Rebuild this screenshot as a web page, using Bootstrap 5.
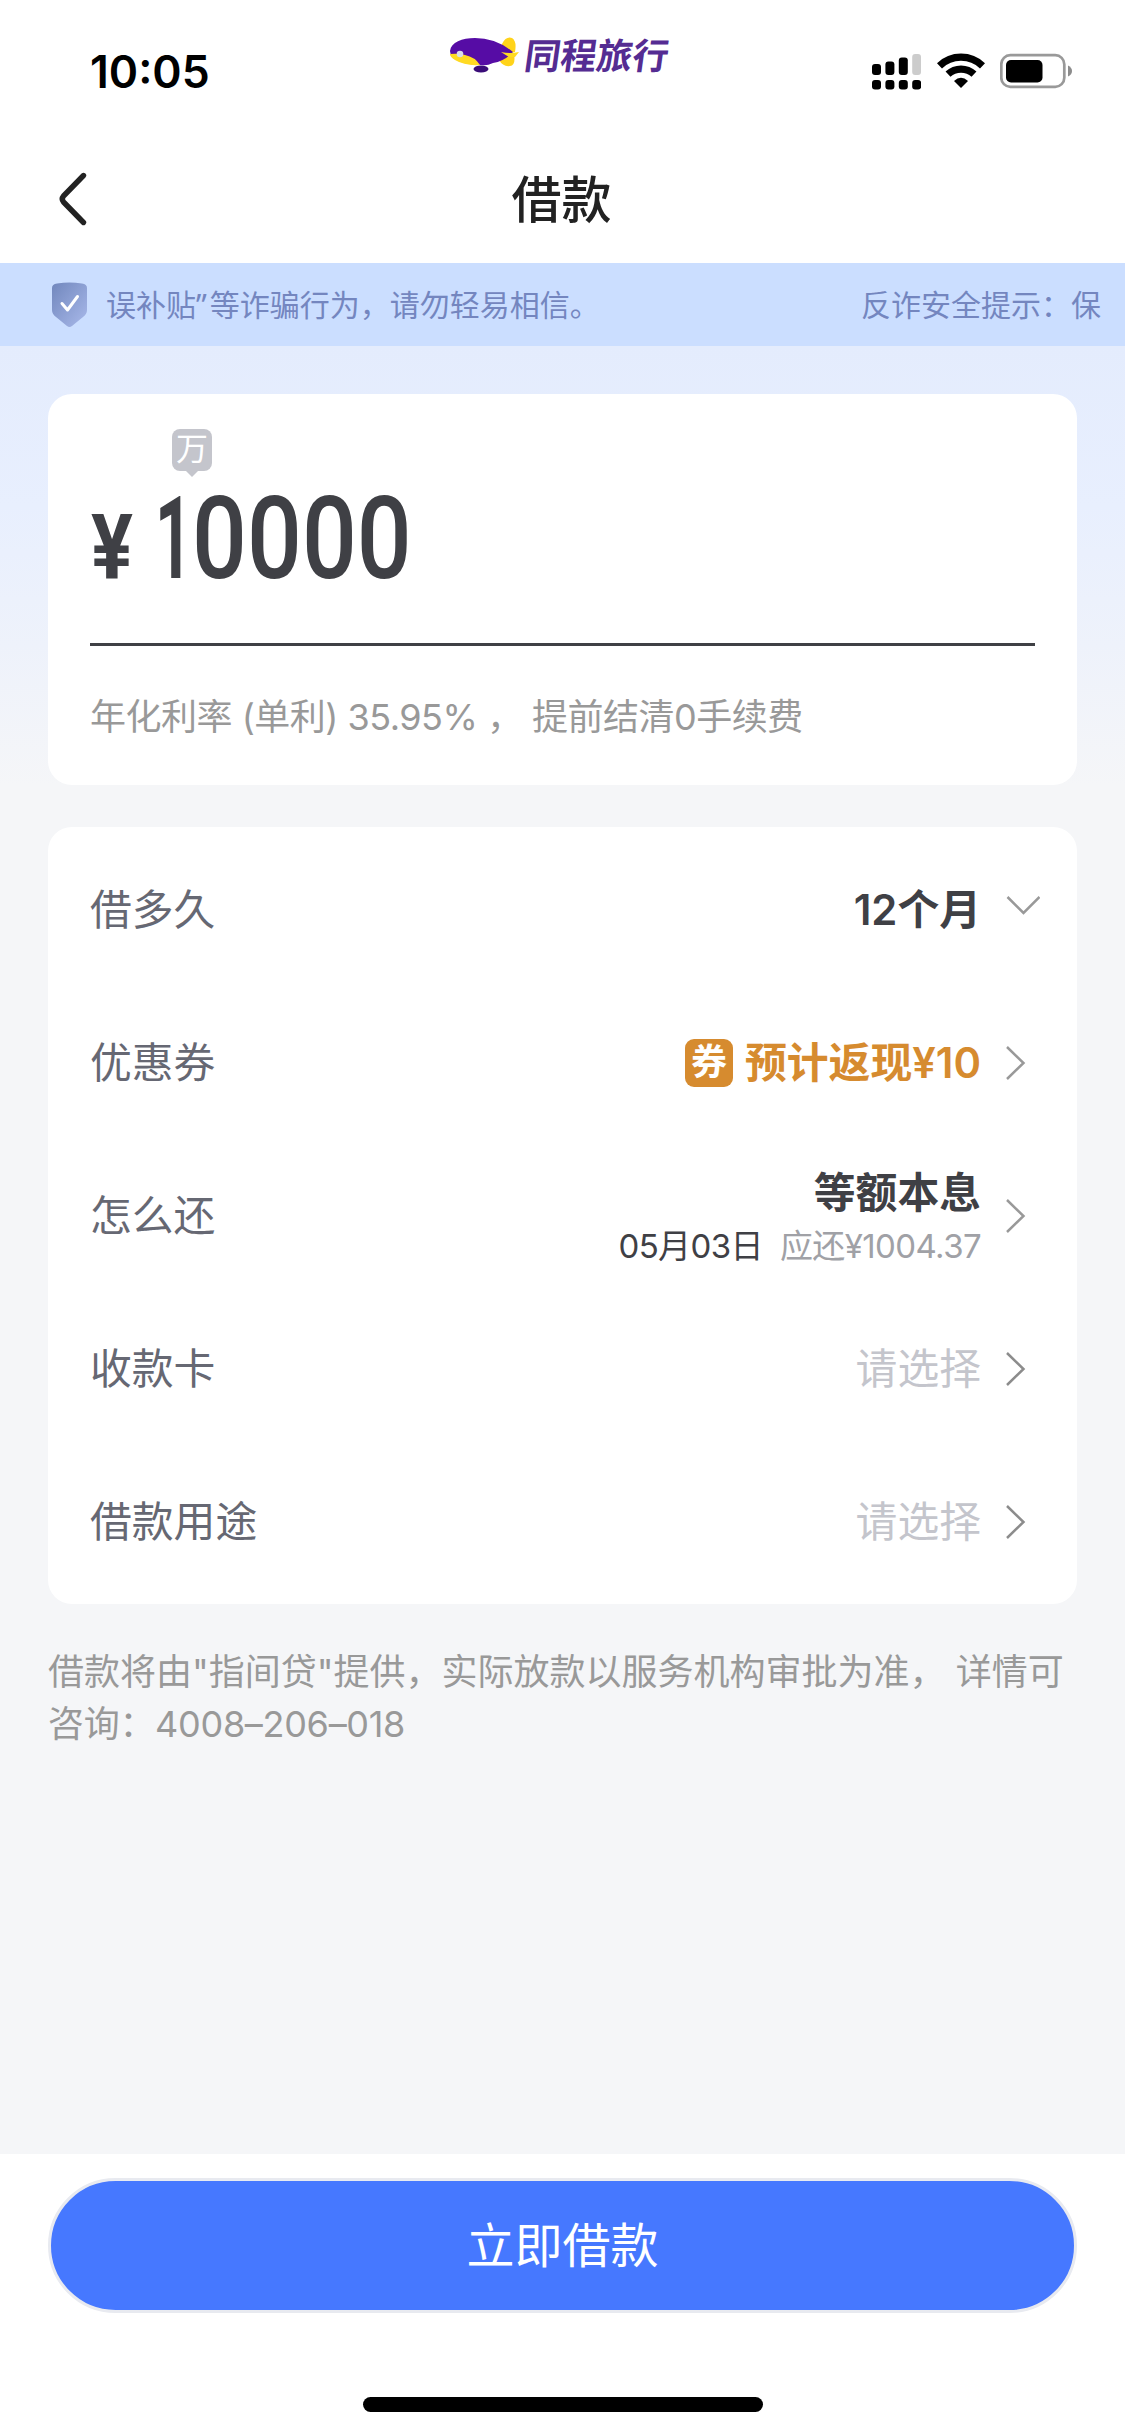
<!DOCTYPE html>
<html lang="zh-CN">
<head>
<meta charset="utf-8">
<meta name="viewport" content="width=device-width, initial-scale=1">
<title>借款</title>
<link href="https://cdn.jsdelivr.net/npm/bootstrap@5.3.0/dist/css/bootstrap.min.css" rel="stylesheet">
<style>
body{font-family:Inter,"Noto Sans CJK SC",sans-serif;background:#f5f6f8;color:#3f4045;line-height:1}
svg{display:block;flex:none}
.screen{width:1125px;height:2435px;overflow:hidden}
.status{height:143px;padding:0 52px 0 90px}
.clock{font-size:44.5px;font-weight:600;color:#000;width:362px;height:143px;line-height:144px}
.brand{padding-top:32px;width:431px}
.airship{margin:0 -4px 0 -2px;transform:translateX(2px)}
.brand-name{font-family:"Noto Sans CJK SC",sans-serif;font-weight:700;font-size:36px;line-height:43px;color:#552c92;transform:skewX(-8deg);margin-left:8px}
.gauges{padding-top:53px;gap:15.5px}
.titlebar{height:120px;padding:0 59px 0 57px}
.titlebar h1{font-size:50px;font-weight:500;color:#222;line-height:114px}
.side{width:60px;padding-top:28px}
.notice{height:83px;background:#cbdeff;color:#7486bf;font-size:30px;line-height:83px;padding:1px 24px 0 52px}
.notice-msg{margin-left:19px}
.quote{font-family:"Noto Sans",sans-serif;margin-right:3px}
.main{height:1808px;padding:48px 48px 0;background:linear-gradient(#e4ecfd 0,#e8effe 160px,#eef2fb 300px,#f5f6f8 440px)}
.panel{border:0;border-radius:24px;background:#fff}
.amount-panel{height:390.5px;padding:35px 42px 0}
.unit{width:40px;height:42px;border-radius:8px;background:#c4c5cc;color:#fff;font-size:32px;line-height:39px;margin-left:82px;position:relative}
.unit::after{content:"";position:absolute;left:14px;top:42px;border:6px solid transparent;border-top-color:#c4c5cc;border-bottom:0}
.amount{font-family:Roboto,sans-serif;height:174.500px;border-bottom:3px solid #3f4045}
.amount-in{height:82px;margin-top:25px;padding-top:2px}
.yen{font-size:91px;line-height:82px;font-weight:700;width:65px;padding-top:9px}
.yen-sign{display:inline-block;transform:scaleX(.86);transform-origin:0 0;margin-left:1px}
.digits{font-size:115px;line-height:82px;font-weight:500;transform:scaleX(.84);transform-origin:0 0}
.one{display:inline-block;transform:scaleX(.67);font-weight:700;transform-origin:0 0;margin-right:-21.800px}
.rate{font-size:36px;line-height:50px;color:#999;margin-top:46px;white-space:pre;letter-spacing:-.5px}
.list-panel{margin-top:42.5px;padding:6px 37px 5px 42px}
.item{height:153.2px;font-size:41.8px}
.item-label{color:#666873;padding-top:2px}
.item-value{font-weight:600;margin-right:10px;padding-top:2px}
.arrow{width:49px}
.coupon{width:48px;height:48px;border-radius:9px;background:#d68b2f;color:#fff;font-size:36px;font-weight:700;line-height:47px;margin-right:12px}
.gold{color:#d68b2f}
.plan{padding-top:9px}
.plan-sub{font-size:33px;font-weight:400;line-height:48px;gap:17px;letter-spacing:-.6px}
.muted{color:#a0a1a6}
.pick{color:#c4c5cc;font-weight:400}
.foot{font-size:36px;line-height:52px;color:#999;margin-top:42.500px;white-space:nowrap}
.hotline{letter-spacing:-.3px}
.action{height:281px;background:#fff;padding:24px 48px 0}
.go{width:1029px;height:135px;border:3px solid #e8eaf0;border-radius:68px;background:#4678ff;color:#fff;font-size:48px;padding:0}
.go:hover{background:#4678ff}
.home{width:400px;height:15px;border-radius:8px;background:#000;margin-top:84px}
</style>
</head>
<body>
<div class="screen d-flex flex-column">
  <header class="bg-white">
    <div class="status d-flex align-items-start">
      <div class="clock">10:05</div>
      <div class="brand d-flex">
        <svg class="airship" width="76" height="44" viewBox="-3 0 76 44">
          <path d="M52 12Q56 4 62 6Q67 9 65 20L50 23ZM49 21L64 22Q66 33 60 34Q53 35 49 28Z" fill="#ffd31a"/>
          <ellipse cx="31" cy="37" rx="7.500" ry="3.500" fill="#3a0c78"/>
          <path d="M0 19C1 10 12 6 25 6Q46 6 63 20Q55 29 43 31Q37 34 31 33Q13 33 3 26Q0 23 0 19Z" fill="#560ca5"/>
          <path d="M0 22Q8 21 15 23Q25 25 30 33Q15 34 5 28Q0 25 0 22Z" fill="#ffda22"/>
          <path d="M51 20Q60 22 69 20L65 25H59Q54 22 51 20Z" fill="#ffda22"/>
          <circle cx="10" cy="22" r="3.300" fill="#d9dde8"/>
        </svg>
        <div class="brand-name">同程旅行</div>
      </div>
      <div class="gauges d-flex">
        <svg width="49" height="37" viewBox="0 0 49 37">
          <g fill="#000"><rect y="11" width="9" height="11" rx="3"/><rect x="13.4" y="8.5" width="9" height="13.5" rx="3"/><rect x="26.8" y="4.5" width="9" height="17.5" rx="3"/><rect y="27" width="9" height="9.5" rx="3"/><rect x="13.4" y="27" width="9" height="9.5" rx="3"/><rect x="26.8" y="27" width="9" height="9.5" rx="3"/><rect x="40.2" y="27" width="9" height="9.5" rx="3"/></g>
          <rect x="40.2" y="1" width="8.8" height="21" rx="3" fill="#ccc"/>
        </svg>
        <svg width="48" height="36" viewBox="0 0 48 36">
          <g fill="none" stroke="#000" stroke-width="7.2"><path d="M2.5 12.8A31 31 0 0 1 45.500 12.800"/><path d="M11 21.200A19 19 0 0 1 37 21.200"/></g>
          <path d="M17 28Q24 21.500 31 28L24 35Z"/>
        </svg>
        <svg width="73" height="36" viewBox="0 0 73 36">
          <rect x="1.300" y="2.200" width="63" height="31.600" rx="9" fill="none" stroke="#999" stroke-width="2.700"/>
          <rect x="6" y="7" width="36.500" height="22.500" rx="5"/>
          <path d="M68 12.500Q72 14.500 72 18T68 23.500Z" fill="#8c8c8c"/>
        </svg>
      </div>
    </div>
    <div class="titlebar d-flex justify-content-between">
      <div class="side"><svg width="32" height="56" viewBox="0 0 32 56"><path d="M26.500 4.500L6.500 25Q4 28 6.500 31L26.500 51.500" fill="none" stroke="#222" stroke-width="5.400" stroke-linecap="round" stroke-linejoin="round"/></svg></div>
      <h1 class="mb-0">借款</h1>
      <div class="side"></div>
    </div>
  </header>

  <div class="notice d-flex align-items-center">
    <svg width="35" height="46" viewBox="0 0 35 46">
      <defs><linearGradient id="sh" x1="0" y1="0" x2="1" y2="1"><stop stop-color="#7187bd"/><stop offset="1" stop-color="#a9b9ea"/></linearGradient></defs>
      <path d="M0 6Q0 2 5 1.500Q17.500-.5 30 1.500Q35 2 35 6V28Q35 32 31 35L20 44Q17.500 46 15 44L4 35Q0 32 0 28Z" fill="url(#sh)"/>
      <path d="M10 21.500L15.500 28L25.500 14.500" fill="none" stroke="#fff" stroke-width="3" stroke-linecap="round" stroke-linejoin="round"/>
    </svg>
    <span class="notice-msg">误补贴<span class="quote">”</span>等诈骗行为，请勿轻易相信。</span>
    <span class="ms-auto">反诈安全提示：保</span>
  </div>

  <main class="main">
    <section class="card panel amount-panel">
      <div class="unit text-center">万</div>
      <div class="amount">
        <div class="amount-in d-flex align-items-start"><span class="yen"><span class="yen-sign">¥</span></span><span class="digits"><span class="one">1</span>0000</span></div>
      </div>
      <div class="rate">年化利率 (单利) 35.95% ， 提前结清0手续费</div>
    </section>

    <section class="card panel list-panel">
      <div class="item d-flex align-items-center">
        <span class="item-label">借多久</span><span class="item-value ms-auto">12个月</span>
        <svg class="arrow" width="49" height="36" viewBox="0 0 49 36"><path d="M16.500 5L32.500 21L48.500 5" fill="none" stroke="#999" stroke-width="2.500"/></svg>
      </div>
      <div class="item d-flex align-items-center">
        <span class="item-label">优惠券</span><span class="coupon ms-auto text-center">券</span><span class="item-value gold">预计返现¥10</span>
        <svg class="arrow" width="49" height="36" viewBox="0 0 49 36"><path d="M16 2L32.500 18L16 34" fill="none" stroke="#999" stroke-width="2.500"/></svg>
      </div>
      <div class="item d-flex align-items-center">
        <span class="item-label">怎么还</span>
        <div class="item-value ms-auto text-end"><div class="pb-2 fw-bold plan">等额本息</div><div class="plan-sub d-flex justify-content-end"><span>05月03日</span><span class="muted">应还¥1004.37</span></div></div>
        <svg class="arrow" width="49" height="36" viewBox="0 0 49 36"><path d="M16 2L32.500 18L16 34" fill="none" stroke="#999" stroke-width="2.500"/></svg>
      </div>
      <div class="item d-flex align-items-center">
        <span class="item-label">收款卡</span><span class="item-value pick ms-auto">请选择</span>
        <svg class="arrow" width="49" height="36" viewBox="0 0 49 36"><path d="M16 2L32.500 18L16 34" fill="none" stroke="#8c8c8c" stroke-width="2.500"/></svg>
      </div>
      <div class="item d-flex align-items-center">
        <span class="item-label">借款用途</span><span class="item-value pick ms-auto">请选择</span>
        <svg class="arrow" width="49" height="36" viewBox="0 0 49 36"><path d="M16 2L32.500 18L16 34" fill="none" stroke="#8c8c8c" stroke-width="2.500"/></svg>
      </div>
    </section>

    <p class="foot mb-0">借款将由"指间贷"提供，实际放款以服务机构审批为准， 详情可<br><span class="hotline">咨询：4008–206–018</span></p>
  </main>

  <footer class="action">
    <button class="btn go" type="button">立即借款</button>
    <div class="home mx-auto"></div>
  </footer>
</div>
<script src="https://cdn.jsdelivr.net/npm/bootstrap@5.3.0/dist/js/bootstrap.bundle.min.js"></script>
</body>
</html>
